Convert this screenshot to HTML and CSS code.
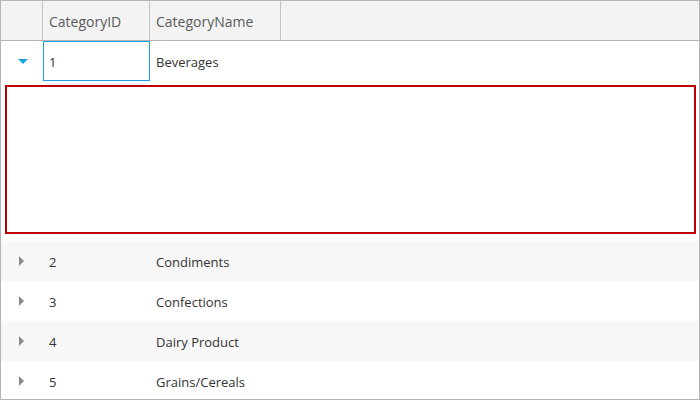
FILE: index.html
```html
<!DOCTYPE html>
<html>
<head>
<meta charset="utf-8">
<link rel="stylesheet" href="styles.css">
</head>
<body>
<div class="grid">
  <div class="row header">
    <div class="cell indent"></div>
    <div class="cell id">CategoryID</div>
    <div class="cell name">CategoryName</div>
    <div class="cell rest"></div>
  </div>
  <div class="row">
    <div class="cell indent"><span class="arrow down"></span></div>
    <div class="cell id focus">1</div>
    <div class="cell name">Beverages</div>
  </div>
  <div class="detail"><div class="detail-box"></div></div>
  <div class="row alt">
    <div class="cell indent"><span class="arrow right"></span></div>
    <div class="cell id">2</div>
    <div class="cell name">Condiments</div>
  </div>
  <div class="row">
    <div class="cell indent"><span class="arrow right"></span></div>
    <div class="cell id">3</div>
    <div class="cell name">Confections</div>
  </div>
  <div class="row alt">
    <div class="cell indent"><span class="arrow right"></span></div>
    <div class="cell id">4</div>
    <div class="cell name">Dairy Product</div>
  </div>
  <div class="row">
    <div class="cell indent"><span class="arrow right"></span></div>
    <div class="cell id">5</div>
    <div class="cell name">Grains/Cereals</div>
  </div>
</div>
</body>
</html>
```
FILE: styles.css
```css
html, body {
  margin: 0;
  padding: 0;
  background: #ffffff;
}
.grid {
  width: 700px;
  height: 400px;
  box-sizing: border-box;
  border: 1px solid #b5b5b5;
  overflow: hidden;
  font-family: "Open Sans", "Noto Sans", sans-serif;
  font-size: 13px;
  color: #333333;
}
.row {
  display: flex;
  height: 40px;
}
.row.alt {
  background: #f7f7f7;
}
.header {
  height: 39px;
  background: #f3f3f3;
  border-bottom: 1px solid #b5b5b5;
  color: #5a5a5a;
  font-size: 14px;
}
.cell {
  box-sizing: border-box;
  display: flex;
  align-items: center;
  padding-left: 6px;
  padding-top: 2px;
}
.indent {
  width: 42px;
  padding-left: 0;
  padding-top: 0;
  justify-content: center;
}
.id {
  width: 107px;
}
.name {
  width: 131px;
}
.header .cell {
  border-right: 1px solid #c4c4c4;
}
.header .rest {
  border-right: none;
  flex: 1;
}
.focus {
  border: 1px solid #1ba1e2;
  padding-left: 5px;
}
.arrow {
  width: 0;
  height: 0;
  display: block;
}
.arrow.down {
  border-left: 5px solid transparent;
  border-right: 5px solid transparent;
  border-top: 5px solid #1ba1e2;
  margin-left: 1px;
}
.arrow.right {
  border-top: 5px solid transparent;
  border-bottom: 5px solid transparent;
  border-left: 5px solid #8a8a8a;
  margin-left: -1px;
}
.detail {
  height: 160px;
  box-sizing: border-box;
  padding: 4px 3px 7px 4px;
}
.detail-box {
  height: 100%;
  box-sizing: border-box;
  border: 2px solid #c00000;
}
```
